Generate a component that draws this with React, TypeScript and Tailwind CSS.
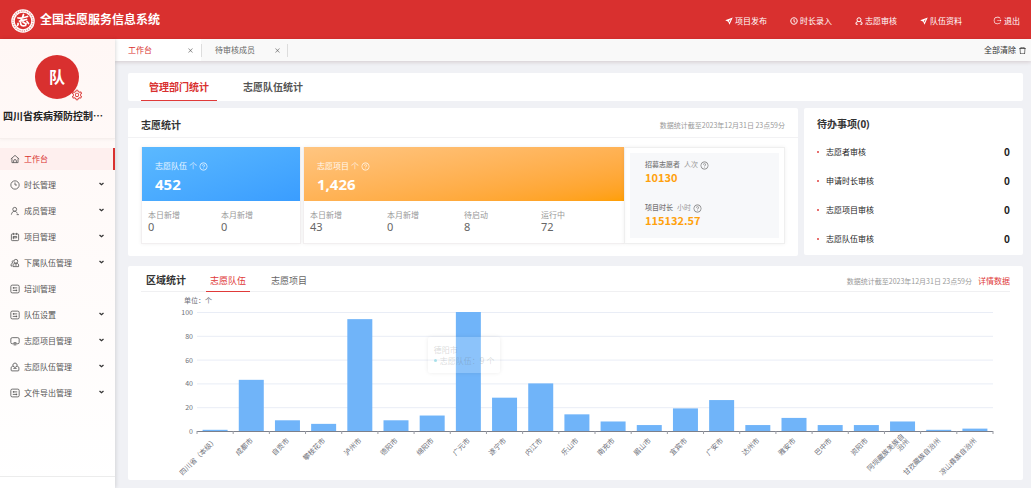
import type { ReactNode } from 'react';
import {
    AiOutlineClockCircle,
    AiOutlineClose,
    AiOutlineDelete,
    AiOutlineLogout,
    AiOutlineQuestionCircle,
    AiOutlineSetting,
} from 'react-icons/ai';

type IconName = 'home' | 'clock' | 'member' | 'project' | 'group' | 'list' | 'screen' | 'team';

const iconPaths: Record<IconName, ReactNode> = {
    home: (
        <>
            <path d="M1.500 9 9 2.500 16.500 9M3.500 8v7.500h11V8" />
            <path d="M6.500 15.500v-3a2.500 2.500 0 0 1 5 0v3" />
        </>
    ),
    clock: (
        <>
            <circle cx="9" cy="9" r="7.500" />
            <path d="M9 4.500V9h3.500" />
        </>
    ),
    member: (
        <>
            <circle cx="8.500" cy="6" r="3.500" />
            <path d="M2.500 15.500c.5-3.500 2.500-6 6-6 2.500 0 3.500 1.500 4.500 4M12 15.500h4" />
        </>
    ),
    project: (
        <>
            <rect x="2.500" y="3.500" width="13" height="12" rx="1.500" />
            <path d="M6 1.500v4M12 1.500v4M6 8h6v2.500H6zM6 8v5" />
        </>
    ),
    group: (
        <>
            <circle cx="10.500" cy="6" r="3.500" />
            <path d="M5.500 15.500v-3c0-2 2-3 5-3s5 1 5 3v3zM6 4.500c-2 0-3 3-1 4.500-2 .5-3 1.500-3 3.500v2h2M8.500 12.500h4" />
        </>
    ),
    list: (
        <>
            <rect x="1.500" y="2" width="15" height="14" rx="2.500" />
            <path d="M5 7h8M5 11.500h8M6.500 5.500v3M11.500 10v3" />
        </>
    ),
    screen: (
        <>
            <rect x="1.500" y="3" width="15" height="11" rx="2.500" />
            <path d="M6.500 12h5M6.500 16h5" />
        </>
    ),
    team: (
        <>
            <path d="M5.500 7.500c-1-3 .5-5.500 3.500-5.500s4.500 2.500 3.500 5.500L9 10z" />
            <path d="M5 7.500 2 9.500v5c0 1 .5 1.500 1.500 1.500h11c1 0 1.500-.5 1.500-1.500v-5l-3-2M6 11.500h6" />
        </>
    ),
};

const MenuIcon = ({ name }: { name: IconName }) => (
    <svg viewBox="0 0 18 18" className="h-[10px] w-[10px] shrink-0 text-[#555]" fill="none" stroke="currentColor" strokeWidth="1.500">
        {iconPaths[name]}
    </svg>
);

const PlaneIcon = () => (
    <svg viewBox="0 0 16 16" className="h-2 w-2" fill="currentColor">
        <path fillRule="evenodd" d="M15.500 1 .5 6.500l6 3L9 15.500 15.500 1zM11.500 4.500 8.800 10.500 7.800 8.200z" />
    </svg>
);

const UserIcon = () => (
    <svg viewBox="0 0 16 16" className="h-2 w-2" fill="none" stroke="currentColor" strokeWidth="2">
        <circle cx="8" cy="5.500" r="4" />
        <path d="M5.500 9 2 11v3.500h3.500M10.500 9l3.500 2v3.500h-3.500" />
    </svg>
);

const Logo = () => (
    <svg viewBox="0 0 48 48" className="h-6 w-6">
        <circle cx="24" cy="24" r="23.500" fill="#fff" />
        <circle cx="24" cy="24" r="20" fill="none" stroke="#ea9a98" strokeWidth="3" strokeDasharray="2.500 2" />
        <circle cx="24" cy="24" r="16.500" fill="#d9302f" />
        <g fill="none" stroke="#fff" strokeLinecap="round" strokeWidth="3.500">
            <path d="M14 18c6 1 13-1 19-3M25 11c-1 4-2 7-5 11M17 24c5 0 9-2 14-3" />
            <path d="M14 29c1 2 0 3-1 4M19 27c0 6 4 8 10 6l1-4M24 26l3 2M32 25l3 4" />
        </g>
    </svg>
);

const Help = () => <AiOutlineQuestionCircle className="h-[9px] w-[9px]" />;

const navLinks = [
    { label: '项目发布', icon: <PlaneIcon /> },
    { label: '时长录入', icon: <AiOutlineClockCircle className="h-2 w-2" strokeWidth="40" /> },
    { label: '志愿审核', icon: <UserIcon /> },
    { label: '队伍资料', icon: <PlaneIcon /> },
];

const menu: { label: string; icon: IconName; sub?: boolean; active?: boolean }[] = [
    { label: '工作台', icon: 'home', active: true },
    { label: '时长管理', icon: 'clock', sub: true },
    { label: '成员管理', icon: 'member', sub: true },
    { label: '项目管理', icon: 'project', sub: true },
    { label: '下属队伍管理', icon: 'group', sub: true },
    { label: '培训管理', icon: 'list' },
    { label: '队伍设置', icon: 'list', sub: true },
    { label: '志愿项目管理', icon: 'screen', sub: true },
    { label: '志愿队伍管理', icon: 'team', sub: true },
    { label: '文件导出管理', icon: 'list', sub: true },
];

const todos = ['志愿者审核', '申请时长审核', '志愿项目审核', '志愿队伍审核'];

const regions: { name: string[]; value: number }[] = [
    { name: ['四川省（本级）'], value: 1 },
    { name: ['成都市'], value: 43 },
    { name: ['自贡市'], value: 9 },
    { name: ['攀枝花市'], value: 6 },
    { name: ['泸州市'], value: 94 },
    { name: ['德阳市'], value: 9 },
    { name: ['绵阳市'], value: 13 },
    { name: ['广元市'], value: 100 },
    { name: ['遂宁市'], value: 28 },
    { name: ['内江市'], value: 40 },
    { name: ['乐山市'], value: 14 },
    { name: ['南充市'], value: 8 },
    { name: ['眉山市'], value: 5 },
    { name: ['宜宾市'], value: 19 },
    { name: ['广安市'], value: 26 },
    { name: ['达州市'], value: 5 },
    { name: ['雅安市'], value: 11 },
    { name: ['巴中市'], value: 5 },
    { name: ['资阳市'], value: 5 },
    { name: ['阿坝藏族羌族自', '治州'], value: 8 },
    { name: ['甘孜藏族自治州'], value: 1 },
    { name: ['凉山彝族自治州'], value: 2 },
];

const Header = () => (
    <header className="flex h-[39px] shrink-0 items-center bg-[#d9302f] px-[11px] pt-0.5 text-white">
        <Logo />
        <h1 className="ml-[5px] pb-px text-[12px] leading-4 font-bold">全国志愿服务信息系统</h1>
        <nav className="ml-auto flex gap-[23px] text-[8px] leading-3">
            {navLinks.map((link) => (
                <a key={link.label} href="#" className="flex items-center gap-[2px]">
                    {link.icon}
                    {link.label}
                </a>
            ))}
            <a href="#" className="ml-2 flex items-center gap-[2px]">
                <AiOutlineLogout className="h-[9px] w-[9px]" />
                退出
            </a>
        </nav>
    </header>
);

const Sidebar = () => (
    <aside className="z-10 flex w-[115px] shrink-0 flex-col bg-linear-to-b from-[#fff7f5] to-white shadow-[1px_0_4px_rgba(0,0,0,0.12)]">
        <div className="flex h-[100px] flex-col border-b border-[#f6efed] pt-4 shadow-[0_1px_3px_rgba(0,0,0,0.04)]">
            <div className="relative ml-[35px] flex h-11 w-11 items-center justify-center rounded-full bg-[#d9302f] text-[16px] leading-5 font-bold text-white">
                队
                <button aria-label="设置" className="absolute -right-1 -bottom-0.5 text-[#d9302f]">
                    <AiOutlineSetting className="h-3 w-3" />
                </button>
            </div>
            <p className="mt-2.5 pl-[3px] font-['Noto_Sans_CJK_SC',sans-serif] text-[10px] leading-[14px] font-bold whitespace-nowrap text-[#222]">
                四川省疾病预防控制…
            </p>
        </div>
        <nav className="mt-[9px] flex flex-col gap-1 text-[8px] leading-3">
            {menu.map((item) => (
                <a
                    key={item.label}
                    href="#"
                    className={
                        item.active
                            ? 'flex h-[22px] items-center gap-1 border-r-2 border-[#d9302f] bg-[#feefee] pl-[10px] text-[#d9302f]'
                            : 'flex h-[22px] items-center gap-1 pl-[10px] text-[#555]'
                    }
                >
                    <MenuIcon name={item.icon} />
                    {item.label}
                    {item.sub && (
                        <svg viewBox="0 0 10 6" className="mr-[11px] mb-0.5 ml-auto h-1 w-[5px]" fill="none" stroke="#333" strokeWidth="2.500">
                            <path d="M1 1l4 3.500L9 1" />
                        </svg>
                    )}
                </a>
            ))}
        </nav>
        <div className="mt-auto h-3 border-t border-[#ececec] bg-white" />
    </aside>
);

const PageTabs = () => (
    <div className="flex h-[22px] shrink-0 items-center bg-[#f9f9f9] text-[8px] leading-3 text-[#666] shadow-[0_1px_4px_rgba(80,20,20,0.18)]">
        <div className="flex h-full w-[86px] items-center justify-between bg-white pr-[7px] pl-[13px]">
            <a href="#" className="text-[#d9302f]">工作台</a>
            <button aria-label="关闭工作台" className="text-[#777]">
                <AiOutlineClose className="h-[7px] w-[7px]" />
            </button>
        </div>
        <div className="flex h-[13px] w-[87px] items-center justify-between border-x border-[#ddd] pr-[6px] pl-[13px]">
            <a href="#">待审核成员</a>
            <button aria-label="关闭待审核成员" className="text-[#777]">
                <AiOutlineClose className="h-[7px] w-[7px]" />
            </button>
        </div>
        <button className="mr-1 ml-auto flex items-center gap-[2px] text-[#333]">
            全部清除
            <AiOutlineDelete className="h-[9px] w-[9px]" />
        </button>
    </div>
);

interface StatProps {
    title: string;
    total: string;
    headClass: string;
    className: string;
    gridClass: string;
    items: [string, string][];
}

const StatBlock = ({ title, total, headClass, className, gridClass, items }: StatProps) => (
    <div className={className}>
        <div className={headClass}>
            <p className="flex items-center gap-[2px] text-[8px] leading-3 text-white/90">
                {title} <span className="text-white/70">个</span> <Help />
            </p>
            <p className="mt-0.5 text-[15px] leading-5 font-bold">{total}</p>
        </div>
        <dl className={gridClass}>
            {items.map(([label, value]) => (
                <div key={label}>
                    <dt className="text-[8px] leading-3 text-[#999]">{label}</dt>
                    <dd className="text-[11px] leading-3 text-[#666]">{value}</dd>
                </div>
            ))}
        </dl>
    </div>
);

const SideStat = ({ label, unit, value }: { label: string; unit: string; value: string }) => (
    <div>
        <p className="flex items-center text-[7px] leading-3 text-[#777]">
            <span className="font-medium">{label}</span>
            <span className="mr-[2px] ml-1 text-[#999]">{unit}</span>
            <Help />
        </p>
        <p className="font-['Noto_Sans_CJK_SC',sans-serif] text-[11px] leading-[13px] font-bold text-[#ffa10d]">{value}</p>
    </div>
);

const Deadline = () => (
    <span className="font-['Noto_Sans_CJK_SC',sans-serif] text-[7px] leading-3 text-[#999]">数据统计截至2023年12月31日 23点59分</span>
);

const VolunteerStats = () => (
    <section className="flex-1 rounded-xs bg-white">
        <div className="flex h-[30px] items-center justify-between border-b border-[#f2f2f4] px-[13px] pt-1">
            <h2 className="text-[10px] leading-4 font-bold text-[#333]">志愿统计</h2>
            <Deadline />
        </div>
        <div className="mx-[13px] mt-[9px] mb-3 grid h-[97px] grid-cols-[1fr_2fr_1fr]">
            <StatBlock
                title="志愿队伍"
                total="452"
                className="mr-px border border-t-0 border-[#f2eff0] shadow-[0_0_4px_rgba(0,0,0,0.06)]"
                headClass="h-[54px] bg-linear-to-br from-[#5bb9ff] to-[#3a9dff] px-[13px] pt-[13px] text-white"
                gridClass="grid grid-cols-2 px-1.5 pt-2"
                items={[['本日新增', '0'], ['本月新增', '0']]}
            />
            <StatBlock
                title="志愿项目"
                total="1,426"
                className="ml-px border border-t-0 border-r-0 border-[#f2eff0] shadow-[0_0_4px_rgba(0,0,0,0.06)]"
                headClass="h-[54px] bg-linear-to-br from-[#ffc580] to-[#ff9f00] px-[13px] pt-[13px] text-white"
                gridClass="grid grid-cols-4 px-1.5 pt-2"
                items={[['本日新增', '43'], ['本月新增', '0'], ['待启动', '8'], ['运行中', '72']]}
            />
            <div className="flex border border-[#efefef] p-[5px] shadow-[0_0_4px_rgba(0,0,0,0.06)]">
                <div className="flex flex-1 flex-col justify-between bg-[#f7f8fa] px-[15px] pt-[6px] pb-[11px]">
                    <SideStat label="招募志愿者" unit="人次" value="10130" />
                    <SideStat label="项目时长" unit="小时" value="115132.57" />
                </div>
            </div>
        </div>
    </section>
);

const TodoList = () => (
    <section className="mb-px w-[219px] rounded-xs bg-white px-[13px] pt-2">
        <h2 className="text-[10px] leading-4 font-bold text-[#333]">待办事项(0)</h2>
        <ul className="mt-[14px] flex flex-col gap-[17px]">
            {todos.map((todo) => (
                <li key={todo} className="flex items-center text-[8px] leading-3 text-[#222]">
                    <span className="mr-[7px] h-[2px] w-[2px] rounded-full bg-[#e0403f]" />
                    <a href="#">{todo}</a>
                    <b className="ml-auto font-['Noto_Sans_CJK_SC',sans-serif] text-[10px]">0</b>
                </li>
            ))}
        </ul>
    </section>
);

const PLOT = { left: 56, right: 852, top: 20, bottom: 139 };
const STEP = (PLOT.right - PLOT.left) / regions.length;
const yOf = (v: number) => PLOT.bottom - (v / 100) * (PLOT.bottom - PLOT.top);

const RegionChart = () => (
    <div className="relative">
        <svg viewBox="0 0 869 188" className="w-full font-['Noto_Sans_CJK_SC',sans-serif] text-[7px]" role="img" aria-label="区域统计">
            <text x="43" y="11" fill="#6e7079">单位：个</text>
            {[0, 20, 40, 60, 80, 100].map((tick) => (
                <g key={tick}>
                    {tick > 0 && <line x1={PLOT.left} x2={PLOT.right} y1={yOf(tick) + 0.5} y2={yOf(tick) + 0.5} stroke="#e9edf6" />}
                    <text x="52" y={yOf(tick) + 3} textAnchor="end" fill="#6e7079">{tick}</text>
                </g>
            ))}
            {regions.map((r, i) => {
                const cx = PLOT.left + STEP * (i + 0.5);
                return (
                    <g key={r.name[0]}>
                        <rect x={cx - 12.5} y={yOf(r.value)} width="25" height={PLOT.bottom - yOf(r.value)} fill="#70b4f9" />
                        <text transform={`translate(${cx} 147) rotate(-45)`} textAnchor="end" fill="#6e7079">
                            {r.name.map((part, n) => (
                                <tspan key={part} x={r.name.length > 1 ? 3 : 0} y={r.name.length > 1 ? n * 7 : 3}>{part}</tspan>
                            ))}
                        </text>
                    </g>
                );
            })}
            <line x1={PLOT.left} x2={PLOT.right} y1={PLOT.bottom + 0.5} y2={PLOT.bottom + 0.5} stroke="#7d808a" />
            {[...regions, null].map((_, i) => (
                <line key={i} x1={PLOT.left + STEP * i} x2={PLOT.left + STEP * i} y1={PLOT.bottom} y2={PLOT.bottom + 3} stroke="#9a9ca4" />
            ))}
        </svg>
        <div className="absolute top-[24%] left-[33%] rounded-xs bg-white/20 px-1.5 py-[7px] text-[8px] leading-[11px] whitespace-nowrap text-[#666]/25 shadow-[0_0_4px_rgba(0,0,0,0.08)]">
            <p>德阳市</p>
            <p className="flex items-center gap-[3px]">
                <span className="h-[3px] w-[3px] rounded-full bg-[#5bc8d8]/50" />
                志愿队伍：9 个
            </p>
        </div>
    </div>
);

const RegionStats = () => (
    <section className="mt-2.5 rounded-xs bg-white px-[13px]">
        <div className="flex h-[26px] items-end border-b border-[#f0f0f2] pl-[5px]">
            <h2 className="mb-[3px] text-[10px] leading-4 font-bold text-[#333]">区域统计</h2>
            <div className="ml-5 flex gap-[17px] text-[9px] leading-[13px] text-[#666]">
                <button className="-mb-px border-b border-[#e03a39] px-1 pb-1 text-[#e03a39]">志愿队伍</button>
                <button className="px-1 pb-1">志愿项目</button>
            </div>
            <div className="mb-1 ml-auto flex items-center gap-1.5">
                <Deadline />
                <a href="#" className="text-[8px] leading-3 text-[#e03a39]">详情数据</a>
            </div>
        </div>
        <RegionChart />
    </section>
);

const App = () => (
    <div className="flex min-h-screen flex-col bg-[#f0f1f5] font-['Noto_Sans','Noto_Sans_CJK_SC',sans-serif]">
        <Header />
        <div className="flex flex-1">
            <Sidebar />
            <div className="flex min-w-0 flex-1 flex-col">
                <PageTabs />
                <main className="pt-3 pr-2 pb-2 pl-[13px]">
                    <div className="flex h-7 gap-[18px] rounded-xs bg-white pl-[13px] text-[10px] leading-4 font-bold">
                        <button className="border-b border-[#e03a39] px-2 pt-px text-[#d9302f]">管理部门统计</button>
                        <button className="px-2 text-[#555]">志愿队伍统计</button>
                    </div>
                    <div className="mt-[7px] flex gap-1.5">
                        <VolunteerStats />
                        <TodoList />
                    </div>
                    <RegionStats />
                </main>
            </div>
        </div>
    </div>
);

export default App;
